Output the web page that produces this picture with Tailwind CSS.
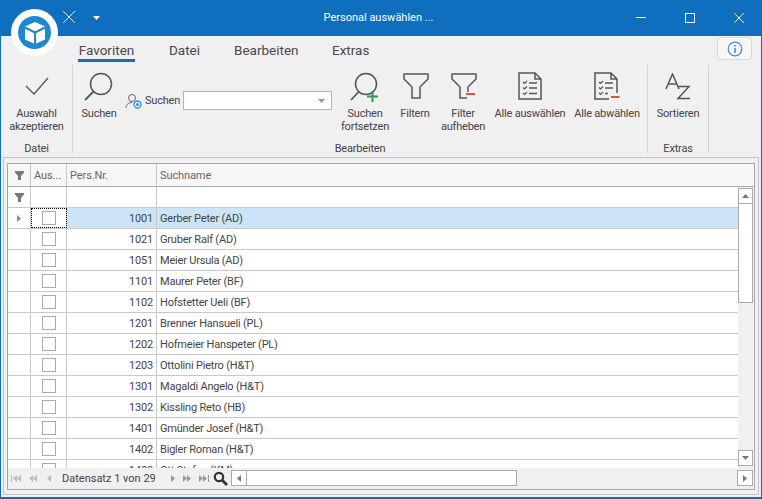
<!doctype html>
<html lang="de"><head><meta charset="utf-8"><title>Personal auswählen</title>
<script src="https://cdn.jsdelivr.net/npm/@tailwindcss/browser@4"></script></head>
<body class="m-0 bg-[#106ebe]">
<div class="relative w-[762px] h-[499px] overflow-hidden flex flex-col bg-[#f0f0f0] border-x border-b-2 border-[#106ebe] font-['Roboto',sans-serif] text-[11px] leading-[13px] text-[#444]">
  <!-- title bar -->
  <div class="h-9 -mx-px shrink-0 bg-[#106ebe] flex items-center text-white relative">
    <svg class="ml-[62px] w-[14px] h-[14px] mb-[3px]" viewBox="0 0 14 14" fill="none" stroke="#fff" stroke-width="1"><path d="M1 1l12 12M13 1L1 13"/></svg>
    <svg class="ml-[17px] w-[7px] h-[4px] mb-[1px]" viewBox="0 0 7 4" fill="#fff"><path d="M0 0h7L3.500 4z"/></svg>
    <div class="absolute left-0 right-[5px] top-[11px] text-center text-[11px] leading-[14px]">Personal auswählen ...</div>
    <div class="ml-auto flex items-center mb-[1px]">
      <div class="w-[10px] h-px bg-white mr-[39px]"></div>
      <div class="w-[10px] h-[10px] border border-white mr-[39px]"></div>
      <svg class="w-[10px] h-[10px] mr-[18px]" viewBox="0 0 10 10" fill="none" stroke="#fff" stroke-width="1"><path d="M0 0l10 10M10 0L0 10"/></svg>
    </div>
  </div>
  <!-- logo -->
  <div class="absolute left-[10px] top-[9px] w-[47px] h-[47px] rounded-full bg-white flex items-center justify-center">
    <div class="w-[33px] h-[33px] rounded-full bg-[#1e88d2] flex items-center justify-center">
      <svg class="w-[22px] h-[24px]" viewBox="0 0 22 24"><path d="M11 1l10 4.500v13L11 23 1 18.500v-13z" fill="#fff"/><path d="M11 11.500L1 6.500M11 11.500l10-5M11 11.500V23" stroke="#1e88d2" stroke-width="2" fill="none"/></svg>
    </div>
  </div>
  <!-- tabs -->
  <div class="h-[29px] shrink-0 relative flex items-start text-[13.500px] leading-[20px] text-[#4a4a4a] pt-[4px] pl-[77px]">
    <div class="w-[57px] text-center h-[19px] border-b-[3px] border-[#106ebe] whitespace-nowrap box-content">Favoriten</div>
    <div class="ml-[34px] w-[31px] whitespace-nowrap">Datei</div>
    <div class="ml-[34px] w-[63px] whitespace-nowrap">Bearbeiten</div>
    <div class="ml-[35px] whitespace-nowrap">Extras</div>
    <div class="absolute left-[716px] top-[1px] w-[35px] h-[23px] bg-[#f7f7f7] border border-[#d8d8d8] rounded-sm flex items-center justify-center">
      <svg class="w-[16px] h-[16px]" viewBox="0 0 16 16" fill="none"><circle cx="8" cy="8" r="6.800" stroke="#3d8fd6" stroke-width="1.200"/><path d="M8 7v5" stroke="#3d8fd6" stroke-width="1.600"/><path d="M8 4v1.600" stroke="#3d8fd6" stroke-width="1.600"/></svg>
    </div>
  </div>
  <!-- ribbon -->
  <div class="h-[88px] shrink-0 flex text-center tracking-[-0.2px]">
    <!-- Datei -->
    <div class="w-[72px] flex flex-col border-r border-[#d4d4d4]">
      <div class="flex-1 flex flex-col items-center pt-[10px]">
        <svg class="w-[26px] h-[22px]" viewBox="0 0 26 22" fill="none" stroke="#555" stroke-width="1.300"><path d="M2 11l8 8L24 3"/></svg>
        <div class="mt-[10px]">Auswahl<br>akzeptieren</div>
      </div>
      <div class="h-[11px]">Datei</div>
    </div>
    <!-- Bearbeiten -->
    <div class="w-[575px] flex flex-col border-r border-[#d4d4d4]">
      <div class="flex-1 flex">
        <div class="w-[52px] flex flex-col items-center pt-[7px]">
          <svg class="w-[32px] h-[30px]" viewBox="0 0 32 30" fill="none" stroke="#555" stroke-width="1.500"><circle cx="18" cy="12" r="10.500"/><path d="M10.500 19.500L2 28" stroke-width="1.800"/></svg>
          <div class="mt-[5px] whitespace-nowrap">Suchen</div>
        </div>
        <div class="w-[215px] flex items-start pt-[26px]">
          <svg class="w-[17px] h-[17px] mt-[2px]" viewBox="0 0 17 17" fill="none"><circle cx="7" cy="5" r="3.500" stroke="#666"/><path d="M1 15c0-4 3-5.500 6-5.500" stroke="#666"/><circle cx="12.500" cy="11.500" r="3.500" stroke="#2f8fd8" stroke-width="1.300"/><circle cx="12.500" cy="11.500" r="1.500" fill="#2f8fd8"/></svg>
          <span class="ml-[3px] w-[35px] text-left mt-[3px] whitespace-nowrap">Suchen</span>
          <div class="ml-[3px] w-[149px] h-[19px] bg-white border border-[#b4b4b4] flex items-center justify-end pr-[6px]">
            <svg class="w-[7px] h-[4px]" viewBox="0 0 7 4" fill="#999"><path d="M0 0h7L3.500 4z"/></svg>
          </div>
        </div>
        <div class="w-[50px] flex flex-col items-center pt-[7px]">
          <svg class="w-[32px] h-[30px]" viewBox="0 0 32 30" fill="none" stroke="#555" stroke-width="1.500"><circle cx="17" cy="12" r="10.500"/><path d="M10 19.500L2 28" stroke-width="1.800"/><path d="M18 24.500h11M23.500 19v11" stroke="#2e9a49" stroke-width="2"/></svg>
          <div class="mt-[5px] whitespace-nowrap">Suchen<br>fortsetzen</div>
        </div>
        <div class="w-[50px] flex flex-col items-center pt-[8px]">
          <svg class="w-[26px] h-[27px] ml-[2px]" viewBox="0 0 26 27" fill="none" stroke="#555" stroke-width="1.500"><path d="M1 1h24v5l-8 8v11H9V14L1 6z"/></svg>
          <div class="mt-[7px] whitespace-nowrap">Filtern</div>
        </div>
        <div class="w-[46px] flex flex-col items-center pt-[8px]">
          <svg class="w-[26px] h-[27px] ml-[2px]" viewBox="0 0 26 27" fill="none" stroke="#555" stroke-width="1.500"><path d="M16 25H9V14L1 6V1h24v5l-8 8v5"/><path d="M15 21h9" stroke="#e5484d" stroke-width="2"/></svg>
          <div class="mt-[7px] whitespace-nowrap">Filter<br>aufheben</div>
        </div>
        <div class="w-[88px] flex flex-col items-center pt-[7px]">
          <svg class="w-[24px] h-[28px]" viewBox="0 0 24 28" fill="none" stroke="#555" stroke-width="1.500"><path d="M1 1h16l6 6v20H1zM17 1v6h6"/><path d="M5 10l1.500 1.500L9 9M5 15.500L6.500 17 9 14.500M5 21l1.500 1.500L9 20" stroke-width="1.200"/><path d="M11 11h8M11 16h8M11 21.500h8"/></svg>
          <div class="mt-[7px] whitespace-nowrap">Alle auswählen</div>
        </div>
        <div class="w-[66px] flex flex-col items-center pt-[7px]">
          <svg class="w-[26px] h-[28px]" viewBox="0 0 26 28" fill="none" stroke="#555" stroke-width="1.500"><path d="M15 27H1V1h16l6 6v14M17 1v6h6"/><path d="M5 10l1.500 1.500L9 9M5 15.500L6.500 17 9 14.500M5 21l1.500 1.500L9 20" stroke-width="1.200"/><path d="M11 11h8M11 16h8M11 21.500h3"/><path d="M17 25h8.500" stroke="#e5484d" stroke-width="2"/></svg>
          <div class="mt-[7px] whitespace-nowrap">Alle abwählen</div>
        </div>
      </div>
      <div class="h-[11px]">Bearbeiten</div>
    </div>
    <!-- Extras -->
    <div class="w-[61px] flex flex-col border-r border-[#d4d4d4]">
      <div class="flex-1 flex flex-col items-center pt-[8px]">
        <svg class="w-[26px] h-[27px]" viewBox="0 0 26 27" fill="none" stroke="#555" stroke-width="1.500"><path d="M1 16L7.500 1 14 16M3.500 11h8"/><path d="M13 13.500h11L13 25.500h12"/></svg>
        <div class="mt-[7px]">Sortieren</div>
      </div>
      <div class="h-[11px]">Extras</div>
    </div>
  </div>
  <!-- grid frame -->
  <div class="flex-1 min-h-0 mx-[2px] mt-[4px] mb-[2px] border border-[#c4c4c4] pt-[5px] px-[3px] pb-[4px] flex flex-col text-[#444]">
    <div class="flex-1 min-h-0 border border-[#a8a8a8] bg-white flex flex-col overflow-hidden">
      <!-- header -->
      <div class="h-[23px] shrink-0 flex bg-[#f7f7f7] border-b border-[#a8a8a8] text-[#666] leading-[24px] tracking-[-0.1px]">
        <div class="w-[23px] border-r border-[#c8c8c8] flex items-center justify-center"><svg class="w-[9px] h-[9px]" viewBox="0 0 9 9" fill="#777"><path d="M0 0h9v1.500L6 5v4H3V5L0 1.500z"/></svg></div>
        <div class="w-[36px] border-r border-[#c8c8c8] pl-[3px] whitespace-nowrap">Aus...</div>
        <div class="w-[90px] border-r border-[#c8c8c8] pl-[3px]">Pers.Nr.</div>
        <div class="flex-1 pl-[3px]">Suchname</div>
      </div>
      <div class="flex-1 min-h-0 flex">
        <div class="flex-1 min-w-0 flex flex-col overflow-hidden tracking-[-0.2px]">
          <!-- filter row -->
          <div class="h-[21px] shrink-0 flex border-b border-[#c8c8c8]">
            <div class="w-[23px] border-r border-[#c8c8c8] flex items-center justify-center bg-white"><svg class="w-[9px] h-[9px]" viewBox="0 0 9 9" fill="#777"><path d="M0 0h9v1.500L6 5v4H3V5L0 1.500z"/></svg></div>
            <div class="w-[36px] border-r border-[#c8c8c8]"></div>
            <div class="w-[90px] border-r border-[#c8c8c8]"></div>
            <div class="flex-1"></div>
          </div>
          <!-- rows -->
          <div class="h-[21px] shrink-0 flex border-b border-[#c8c8c8] leading-[22px]">
            <div class="w-[23px] border-r border-[#c8c8c8] flex items-center justify-center"><svg class="w-[4px] h-[7px]" viewBox="0 0 4 7" fill="#888"><path d="M0 0l4 3.500L0 7z"/></svg></div>
            <div class="w-[36px] border-r border-[#c8c8c8] flex items-center justify-center outline-1 outline-dotted outline-black -outline-offset-1"><div class="w-[14px] h-[14px] border border-[#aaa] bg-white"></div></div>
            <div class="w-[90px] border-r border-[#c8c8c8] bg-[#cce4f7] text-right pr-[3px]">1001</div>
            <div class="flex-1 pl-[3px] bg-[#cce4f7]">Gerber Peter (AD)</div>
          </div>
          <div class="h-[21px] shrink-0 flex border-b border-[#c8c8c8] leading-[22px]"><div class="w-[23px] border-r border-[#c8c8c8]"></div><div class="w-[36px] border-r border-[#c8c8c8] flex items-center justify-center"><div class="w-[14px] h-[14px] border border-[#aaa]"></div></div><div class="w-[90px] border-r border-[#c8c8c8] text-right pr-[3px]">1021</div><div class="flex-1 pl-[3px]">Gruber Ralf (AD)</div></div>
          <div class="h-[21px] shrink-0 flex border-b border-[#c8c8c8] leading-[22px]"><div class="w-[23px] border-r border-[#c8c8c8]"></div><div class="w-[36px] border-r border-[#c8c8c8] flex items-center justify-center"><div class="w-[14px] h-[14px] border border-[#aaa]"></div></div><div class="w-[90px] border-r border-[#c8c8c8] text-right pr-[3px]">1051</div><div class="flex-1 pl-[3px]">Meier Ursula (AD)</div></div>
          <div class="h-[21px] shrink-0 flex border-b border-[#c8c8c8] leading-[22px]"><div class="w-[23px] border-r border-[#c8c8c8]"></div><div class="w-[36px] border-r border-[#c8c8c8] flex items-center justify-center"><div class="w-[14px] h-[14px] border border-[#aaa]"></div></div><div class="w-[90px] border-r border-[#c8c8c8] text-right pr-[3px]">1101</div><div class="flex-1 pl-[3px]">Maurer Peter (BF)</div></div>
          <div class="h-[21px] shrink-0 flex border-b border-[#c8c8c8] leading-[22px]"><div class="w-[23px] border-r border-[#c8c8c8]"></div><div class="w-[36px] border-r border-[#c8c8c8] flex items-center justify-center"><div class="w-[14px] h-[14px] border border-[#aaa]"></div></div><div class="w-[90px] border-r border-[#c8c8c8] text-right pr-[3px]">1102</div><div class="flex-1 pl-[3px]">Hofstetter Ueli (BF)</div></div>
          <div class="h-[21px] shrink-0 flex border-b border-[#c8c8c8] leading-[22px]"><div class="w-[23px] border-r border-[#c8c8c8]"></div><div class="w-[36px] border-r border-[#c8c8c8] flex items-center justify-center"><div class="w-[14px] h-[14px] border border-[#aaa]"></div></div><div class="w-[90px] border-r border-[#c8c8c8] text-right pr-[3px]">1201</div><div class="flex-1 pl-[3px]">Brenner Hansueli (PL)</div></div>
          <div class="h-[21px] shrink-0 flex border-b border-[#c8c8c8] leading-[22px]"><div class="w-[23px] border-r border-[#c8c8c8]"></div><div class="w-[36px] border-r border-[#c8c8c8] flex items-center justify-center"><div class="w-[14px] h-[14px] border border-[#aaa]"></div></div><div class="w-[90px] border-r border-[#c8c8c8] text-right pr-[3px]">1202</div><div class="flex-1 pl-[3px]">Hofmeier Hanspeter (PL)</div></div>
          <div class="h-[21px] shrink-0 flex border-b border-[#c8c8c8] leading-[22px]"><div class="w-[23px] border-r border-[#c8c8c8]"></div><div class="w-[36px] border-r border-[#c8c8c8] flex items-center justify-center"><div class="w-[14px] h-[14px] border border-[#aaa]"></div></div><div class="w-[90px] border-r border-[#c8c8c8] text-right pr-[3px]">1203</div><div class="flex-1 pl-[3px]">Ottolini Pietro (H&amp;T)</div></div>
          <div class="h-[21px] shrink-0 flex border-b border-[#c8c8c8] leading-[22px]"><div class="w-[23px] border-r border-[#c8c8c8]"></div><div class="w-[36px] border-r border-[#c8c8c8] flex items-center justify-center"><div class="w-[14px] h-[14px] border border-[#aaa]"></div></div><div class="w-[90px] border-r border-[#c8c8c8] text-right pr-[3px]">1301</div><div class="flex-1 pl-[3px]">Magaldi Angelo (H&amp;T)</div></div>
          <div class="h-[21px] shrink-0 flex border-b border-[#c8c8c8] leading-[22px]"><div class="w-[23px] border-r border-[#c8c8c8]"></div><div class="w-[36px] border-r border-[#c8c8c8] flex items-center justify-center"><div class="w-[14px] h-[14px] border border-[#aaa]"></div></div><div class="w-[90px] border-r border-[#c8c8c8] text-right pr-[3px]">1302</div><div class="flex-1 pl-[3px]">Kissling Reto (HB)</div></div>
          <div class="h-[21px] shrink-0 flex border-b border-[#c8c8c8] leading-[22px]"><div class="w-[23px] border-r border-[#c8c8c8]"></div><div class="w-[36px] border-r border-[#c8c8c8] flex items-center justify-center"><div class="w-[14px] h-[14px] border border-[#aaa]"></div></div><div class="w-[90px] border-r border-[#c8c8c8] text-right pr-[3px]">1401</div><div class="flex-1 pl-[3px]">Gmünder Josef (H&amp;T)</div></div>
          <div class="h-[21px] shrink-0 flex border-b border-[#c8c8c8] leading-[22px]"><div class="w-[23px] border-r border-[#c8c8c8]"></div><div class="w-[36px] border-r border-[#c8c8c8] flex items-center justify-center"><div class="w-[14px] h-[14px] border border-[#aaa]"></div></div><div class="w-[90px] border-r border-[#c8c8c8] text-right pr-[3px]">1402</div><div class="flex-1 pl-[3px]">Bigler Roman (H&amp;T)</div></div>
          <div class="h-[21px] shrink-0 flex border-b border-[#c8c8c8] leading-[22px]"><div class="w-[23px] border-r border-[#c8c8c8]"></div><div class="w-[36px] border-r border-[#c8c8c8] flex items-center justify-center"><div class="w-[14px] h-[14px] border border-[#aaa]"></div></div><div class="w-[90px] border-r border-[#c8c8c8] text-right pr-[3px]">1403</div><div class="flex-1 pl-[3px]">Ott Stefan (KM)</div></div>
        </div>
        <!-- v scrollbar -->
        <div class="w-[16px] shrink-0 bg-[#f0f0f0] flex flex-col items-start pt-px">
          <div class="w-[15px] h-[16px] border border-[#aaa] bg-white flex items-center justify-center"><svg class="w-[7px] h-[4px]" viewBox="0 0 7 4" fill="#777"><path d="M0 4h7L3.500 0z"/></svg></div>
          <div class="w-[15px] h-[99px] border border-t-0 border-[#aaa] bg-white"></div>
          <div class="mt-auto mb-[2px] w-[15px] h-[16px] border border-[#aaa] bg-white flex items-center justify-center"><svg class="w-[7px] h-[4px]" viewBox="0 0 7 4" fill="#777"><path d="M0 0h7L3.500 4z"/></svg></div>
        </div>
      </div>
      <!-- nav -->
      <div class="h-[21px] shrink-0 flex items-center bg-[#f0f0f0] text-[#444]">
        <div class="w-[60px] h-[9px] pl-[3px] flex items-center gap-[8px] text-[#bbb]">
          <svg class="w-[10px] h-[7px]" viewBox="0 0 10 7" fill="#bbb"><path d="M0 0h1v7H0zM6 0v7L2 3.500zM10 0v7L6 3.500z"/></svg>
          <svg class="w-[8px] h-[7px]" viewBox="0 0 8 7" fill="#bbb"><path d="M4 0v7L0 3.500zM8 0v7L4 3.500z"/></svg>
          <svg class="w-[4px] h-[7px] ml-[2px]" viewBox="0 0 4 7" fill="#bbb"><path d="M4 0v7L0 3.500z"/></svg>
        </div>
        <div class="w-[108px] -ml-[6px] whitespace-nowrap">Datensatz 1 von 29</div>
        <div class="flex items-center gap-[8px] ml-[1px]">
          <svg class="w-[4px] h-[7px]" viewBox="0 0 4 7" fill="#999"><path d="M0 0v7l4-3.500z"/></svg>
          <svg class="w-[8px] h-[7px]" viewBox="0 0 8 7" fill="#999"><path d="M0 0v7l4-3.500zM4 0v7l4-3.500z"/></svg>
          <svg class="w-[10px] h-[7px]" viewBox="0 0 10 7" fill="#999"><path d="M0 0v7l4-3.500zM4 0v7l4-3.500zM9 0h1v7H9z"/></svg>
        </div>
        <svg class="ml-[4px] w-[15px] h-[15px]" viewBox="0 0 15 15" fill="none" stroke="#333"><circle cx="6" cy="6" r="4.200" stroke-width="2.200"/><path d="M9.500 9.500L14 14" stroke-width="2.800"/></svg>
        <div class="ml-[3px] mr-px flex-1 flex h-[16px] min-w-0 mb-[1px]">
          <div class="w-[16px] shrink-0 border border-[#aaa] bg-white flex items-center justify-center"><svg class="w-[4px] h-[7px]" viewBox="0 0 4 7" fill="#777"><path d="M4 0v7L0 3.500z"/></svg></div>
          <div class="w-[270px] shrink-0 border border-l-0 border-[#aaa] bg-white"></div>
          <div class="flex-1"></div>
          <div class="w-[16px] shrink-0 border border-[#aaa] bg-white flex items-center justify-center"><svg class="w-[4px] h-[7px]" viewBox="0 0 4 7" fill="#777"><path d="M0 0v7l4-3.500z"/></svg></div>
        </div>
      </div>
    </div>
  </div>
</div>
</body></html>
